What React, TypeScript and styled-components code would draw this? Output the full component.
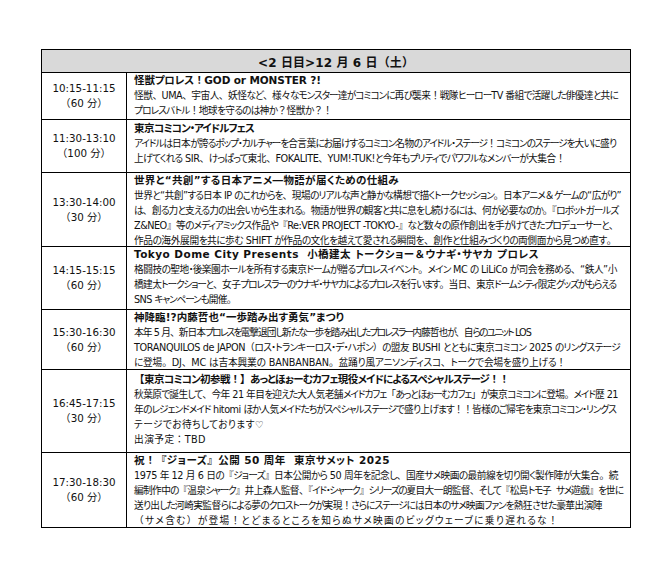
import React, { useLayoutEffect, useRef, useState, useEffect, useMemo } from "react";
import styled, { createGlobalStyle } from "styled-components";

const Global = createGlobalStyle`
  html, body { margin: 0; padding: 0; background: #fff; }
  body {
    font-family: "DejaVu Sans", "Noto Sans CJK JP", sans-serif;
    color: #111;
  }
`;

const Page = styled.div`
  padding: 49px 0 0 41px;
`;

const Schedule = styled.div`
  width: 590px;
  border: 1px solid #000;
  box-sizing: border-box;
  font-feature-settings: "palt";
`;

const HeaderRow = styled.div`
  height: 22px;
  background: #d9d9d9;
  display: flex;
  align-items: center;
  justify-content: center;
  font-weight: bold;
  font-size: 12px;
`;

const Row = styled.div<{ $h: number }>`
  display: grid;
  grid-template-columns: 85px 1fr;
  height: ${(p) => p.$h}px;
  border-top: 1px solid #000;
  box-sizing: border-box;
`;

const TimeCell = styled.div`
  border-right: 1px solid #000;
  display: flex;
  flex-direction: column;
  align-items: center;
  justify-content: center;
  font-size: 10.3px;
  line-height: 15px;
  font-feature-settings: normal;
`;

const ContentCell = styled.div<{ $pt: number }>`
  padding: ${(p) => p.$pt}px 0 0 7px;
  font-size: 9.7px;
  line-height: 15px;
  overflow: hidden;
`;

const Title = styled.div`
  font-weight: bold;
  font-size: 10.5px;
  text-decoration: underline;
  text-underline-offset: 2px;
`;

const Line = styled.div``;

const FitSpan = styled.span`
  display: inline-block;
  white-space: pre;
`;

const Run = styled.span<{ $full: boolean }>`
  font-feature-settings: ${(p) => (p.$full ? "normal" : "palt")};
`;

const PUNCT = /[、。！？（）「」『』【】：＆\u3000]/;
const KANA = /[\u3040-\u30ff\uff01-\uff60]/;

type Kind = "k" | "p" | "o";
type Seg = { kind: Kind; s: string };

function kindOf(ch: string): Kind {
  if (PUNCT.test(ch)) return "p";
  if (KANA.test(ch)) return "k";
  return "o";
}

function split(text: string): Seg[] {
  const out: Seg[] = [];
  for (const ch of Array.from(text)) {
    const k = kindOf(ch);
    const last = out[out.length - 1];
    if (last && last.kind === k) last.s += ch;
    else out.push({ kind: k, s: ch });
  }
  return out;
}

const SHRINK_OTHER = 0.5;

function Fit({ w, text }: { w?: number; text: string }) {
  const segs = useMemo(() => split(text), [text]);
  const len = (k: Kind) =>
    segs.filter((s) => s.kind === k).reduce((a, s) => a + Array.from(s.s).length, 0);
  const nk = len("k");
  const no = len("o") + len("p");
  const ref = useRef<HTMLSpanElement>(null);
  const cur = useRef({ k: 0, o: 0 });
  const [sp, setSp] = useState({ k: 0, o: 0 });
  const measure = () => {
    const el = ref.current;
    if (!el || !w) return;
    const width = el.getBoundingClientRect().width;
    const natural = width - nk * cur.current.k - no * cur.current.o;
    const d = w - natural;
    let k: number;
    let o: number;
    if (d >= 0) {
      k = o = d / (nk + no);
    } else {
      const u = d / (nk + SHRINK_OTHER * no);
      k = u;
      o = SHRINK_OTHER * u;
    }
    cur.current = { k, o };
    setSp({ k, o });
  };
  useLayoutEffect(measure, [w, text]);
  useEffect(() => {
    if (document.fonts && document.fonts.ready) document.fonts.ready.then(measure);
  }, [w, text]);
  return (
    <FitSpan ref={ref}>
      {segs.map((s, i) => (
        <Run
          key={i}
          $full={s.kind === "p"}
          style={{ letterSpacing: `${s.kind === "k" ? sp.k : sp.o}px` }}
        >
          {s.s}
        </Run>
      ))}
    </FitSpan>
  );
}

type L = [string, number?];

type Item = {
  time: string;
  dur: string;
  title: L;
  lines: L[];
  h: number;
  pt: number;
};

const X0 = 135;
const FULL = 619 - X0;
const e = (x: number) => x - X0;

const items: Item[] = [
  {
    time: "10:15-11:15",
    dur: "（60 分）",
    title: ["怪獣プロレス！GOD or MONSTER ?!", e(322)],
    lines: [
      ["怪獣、UMA、宇宙人、妖怪など、様々なモンスター達がコミコンに再び襲来！戦隊ヒーローTV 番組で活躍した俳優達と共に", FULL],
      ["プロレスバトル！地球を守るのは神か？怪獣か？！", e(333)],
    ],
    h: 47,
    pt: 0,
  },
  {
    time: "11:30-13:10",
    dur: "（100 分）",
    title: ["東京コミコン・アイドルフェス", e(255)],
    lines: [
      ["アイドルは日本が誇るポップ・カルチャーを合言葉にお届けするコミコン名物のアイドル・ステージ！コミコンのステージを大いに盛り", e(617)],
      ["上げてくれる SIR、けっぱって東北、FOKALITE、YUM!-TUK!と今年もプリティでパワフルなメンバーが大集合！", e(566)],
    ],
    h: 53,
    pt: 1,
  },
  {
    time: "13:30-14:00",
    dur: "（30 分）",
    title: ["世界と“共創”する日本アニメ―物語が届くための仕組み", e(400)],
    lines: [
      ["世界と“共創”する日本 IP のこれからを、現場のリアルな声と静かな構想で描くトークセッション。日本アニメ＆ゲームの“広がり”", e(622)],
      ["は、創る力と支える力の出会いから生まれる。物語が世界の観客と共に息をし続けるには、何が必要なのか。『ロボットガールズ", FULL],
      ["Z&NEO』等のメディアミックス作品や『Re:VER PROJECT -TOKYO-』など数々の原作創出を手がけてきたプロデューサーと、", FULL],
      ["作品の海外展開を共に歩む SHIFT が作品の文化を越えて愛される瞬間を、創作と仕組みづくりの両側面から見つめ直す。", e(617)],
    ],
    h: 74,
    pt: 0,
  },
  {
    time: "14:15-15:15",
    dur: "（60 分）",
    title: ["Tokyo Dome City Presents  小橋建太 トークショー＆ウナギ・サヤカ プロレス", e(540)],
    lines: [
      ["格闘技の聖地・後楽園ホールを所有する東京ドームが贈るプロレスイベント。メイン MC の LiLiCo が司会を務める、“鉄人”小", e(618)],
      ["橋建太トークショーと、女子プロレスラーのウナギ・サヤカによるプロレスを行います。当日、東京ドームシティ限定グッズがもらえる", e(617)],
      ["SNS キャンペーンも開催。", e(237)],
    ],
    h: 63,
    pt: 0,
  },
  {
    time: "15:30-16:30",
    dur: "（60 分）",
    title: ["神降臨!?内藤哲也“一歩踏み出す勇気”まつり", e(345)],
    lines: [
      ["本年 5 月、新日本プロレスを電撃退団し新たな一歩を踏み出したプロレスラー内藤哲也が、自らのユニット LOS", e(532)],
      ["TORANQUILOS de JAPON（ロス・トランキーロス・デ・ハポン）の盟友 BUSHI とともに東京コミコン 2025 のリングステージ", e(621)],
      ["に登場。DJ、MC は吉本興業の BANBANBAN。盆踊り風アニソンディスコ、トークで会場を盛り上げる！", e(567)],
    ],
    h: 60,
    pt: 0,
  },
  {
    time: "16:45-17:15",
    dur: "（30 分）",
    title: ["【東京コミコン初参戦！】あっとほぉーむカフェ現役メイドによるスペシャルステージ！！", e(510)],
    lines: [
      ["秋葉原で誕生して、今年 21 年目を迎えた大人気老舗メイドカフェ「あっとほぉーむカフェ」が東京コミコンに登場。メイド歴 21", FULL],
      ["年のレジェンドメイド hitomi ほか人気メイドたちがスペシャルステージで盛り上げます！！皆様のご帰宅を東京コミコン・リングス", e(617)],
      ["テージでお待ちしております♡", e(265)],
      ["出演予定：TBD", e(207)],
    ],
    h: 83,
    pt: 2,
  },
  {
    time: "17:30-18:30",
    dur: "（60 分）",
    title: ["祝！『ジョーズ』公開 50 周年  東京サメット 2025", e(391)],
    lines: [
      ["1975 年 12 月 6 日の『ジョーズ』日本公開から 50 周年を記念し、国産サメ映画の最前線を切り開く製作陣が大集合。続", FULL],
      ["編制作中の『温泉シャーク』井上森人監督、『イド・シャーク』シリーズの夏目大一朗監督、そして『松島トモ子  サメ遊戯』を世に", e(624)],
      ["送り出した河崎実監督らによる夢のクロストークが実現！さらにステージには日本のサメ映画ファンを熱狂させた豪華出演陣", e(603)],
      ["（サメ含む）が登場！とどまるところを知らぬサメ映画のビッグウェーブに乗り遅れるな！", e(560)],
    ],
    h: 75,
    pt: 0,
  },
];

export default function App() {
  return (
    <>
      <Global />
      <Page>
        <Schedule>
          <HeaderRow>
            <Fit text="<2 日目>12 月 6 日（土）" w={156} />
          </HeaderRow>
          {items.map((it) => (
            <Row key={it.time} $h={it.h}>
              <TimeCell>
                <div>{it.time}</div>
                <div>{it.dur}</div>
              </TimeCell>
              <ContentCell $pt={it.pt}>
                <Title>
                  <Fit text={it.title[0]} w={it.title[1]} />
                </Title>
                {it.lines.map((l, i) => (
                  <Line key={i}>
                    <Fit text={l[0]} w={l[1]} />
                  </Line>
                ))}
              </ContentCell>
            </Row>
          ))}
        </Schedule>
      </Page>
    </>
  );
}
